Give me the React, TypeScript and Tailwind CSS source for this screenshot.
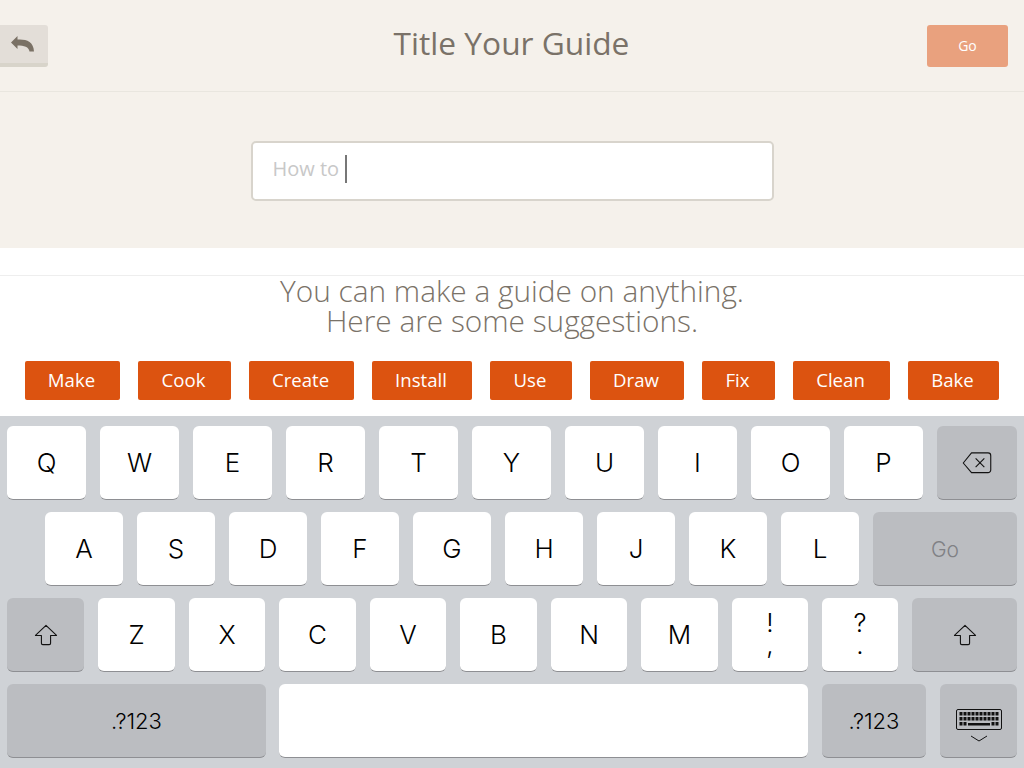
import type { ReactNode } from 'react'

const openSans = { fontFamily: '"Open Sans", sans-serif' }

const suggestions = [
  { label: 'Make', w: 'w-[95px]' },
  { label: 'Cook', w: 'w-[93px]' },
  { label: 'Create', w: 'w-[105px]' },
  { label: 'Install', w: 'w-[100px]' },
  { label: 'Use', w: 'w-[82px]' },
  { label: 'Draw', w: 'w-[94px]' },
  { label: 'Fix', w: 'w-[73px]' },
  { label: 'Clean', w: 'w-[97px]' },
  { label: 'Bake', w: 'w-[91px]' },
]

const row1 = ['Q', 'W', 'E', 'R', 'T', 'Y', 'U', 'I', 'O', 'P']
const row2 = ['A', 'S', 'D', 'F', 'G', 'H', 'J', 'K', 'L']
const row3 = [
  { label: 'Z', w: 'w-[77px]' }, { label: 'X', w: 'w-[76px]' }, { label: 'C', w: 'w-[77px]' }, { label: 'V', w: 'w-[76px]' },
  { label: 'B', w: 'w-[77px]' }, { label: 'N', w: 'w-[76px]' }, { label: 'M', w: 'w-[77px]' },
]

function Key({ className, dark, children }: { className: string; dark?: boolean; children?: ReactNode }) {
  return (
    <div
      className={`h-[74px] shrink-0 rounded-[6px] flex items-center justify-center border-b border-[#8e8f93] text-black font-[275] ${
        dark ? 'bg-[#bbbdc1]' : 'bg-white'
      } ${className}`}
    >
      {children}
    </div>
  )
}

function ShiftIcon() {
  return (
    <svg width="24" height="22" viewBox="0 0 26 24" fill="none" stroke="#111" strokeWidth="1.2" strokeLinejoin="round">
      <path d="M13 1.5 L24.5 12.5 H18 V21 a1.5 1.5 0 0 1-1.5 1.5 H9.5 A1.5 1.5 0 0 1 8 21 V12.5 H1.5 Z" />
    </svg>
  )
}

function BackspaceIcon() {
  return (
    <svg width="30" height="22" viewBox="0 0 32 24" fill="none" stroke="#111" strokeWidth="1.2" strokeLinejoin="round">
      <path d="M10 1 H28 a3 3 0 0 1 3 3 V19.5 a3 3 0 0 1-3 3 H10 L1 12 Z" />
      <path d="M14.5 7 L24 16.5 M24 7 L14.5 16.5" />
    </svg>
  )
}

function KeyboardIcon() {
  const dots = []
  for (let y = 0; y < 3; y++) {
    for (let x = 0; x < 10; x++) {
      if (y === 2 && x > 1 && x < 8) continue
      dots.push(<rect key={`${x}-${y}`} x={3.5 + x * 4} y={3 + y * 5} width="3" height="3.5" fill="#111" />)
    }
  }
  return (
    <svg width="46" height="34" viewBox="0 0 46 34" fill="none">
      <rect x="0.5" y="0.5" width="45" height="20" rx="1.5" stroke="#111" />
      {dots}
      <rect x="12" y="14" width="22" height="2.5" fill="#111" />
      <path d="M15 27 L23 32 L31 27" stroke="#111" strokeWidth="1" />
    </svg>
  )
}

export default function App() {
  return (
    <div className="w-[1024px] h-[768px] overflow-hidden flex flex-col bg-white" style={openSans}>
      {/* Title bar */}
      <div className="h-[248px] shrink-0 bg-[#f5f1eb] flex flex-col">
        <div className="h-[92px] shrink-0 border-b border-[#e9e6df] grid grid-cols-[1fr_auto_1fr] items-center pr-4">
          <button className="w-[48px] h-[42px] bg-[#e3ded8] border-b-4 border-[#d8d4ca] rounded-r-[3px] flex items-center justify-center pr-[3px]">
            <svg width="24" height="16" viewBox="0 0 24 16" fill="#7a7165">
              <path d="M0 6.5 L6.5 0 V3.5 C15 3 22.5 5 23 15.5 H18.5 C18 11 13 9.5 6.5 9.5 V13 Z" />
            </svg>
          </button>
          <h1 className="text-[31.7px] leading-none text-[#7a7268] pb-[6px] pl-[15px]">Title Your Guide</h1>
          <button className="justify-self-end w-[81px] h-[42px] bg-[#e9a17e] rounded-[3px] text-white text-sm">Go</button>
        </div>
        <div className="flex justify-center pt-[49px]">
          <div className="w-[523px] h-[60px] bg-white border-2 border-[#d8d4cc] rounded-[5px] flex items-center pl-[20px] pb-[4px]">
            <span className="text-xl text-[#c8c8c8]">How to</span>
            <span className="ml-[6px] w-[2px] h-[28px] bg-[#777]" />
          </div>
        </div>
      </div>

      {/* Suggestions */}
      <div className="h-[168px] shrink-0 flex flex-col">
        <div className="h-[28px] shrink-0 border-b border-[#eeeeee]" />
        <p className="text-center text-[29.8px] leading-[30px] font-light text-[#7a7268]">
          You can make a guide on anything.
          <br />
          Here are some suggestions.
        </p>
        <div className="flex justify-center gap-[18px] mt-[25px]">
          {suggestions.map(s => (
            <button key={s.label} className={`h-[39px] pb-[2px] pr-[2px] bg-[#dc5310] rounded-[2px] text-white text-[18.6px] ${s.w}`}>
              {s.label}
            </button>
          ))}
        </div>
      </div>

      {/* Keyboard */}
      <div
        className="flex-1 bg-[#cfd2d6] px-[7px] pt-[10px] flex flex-col gap-[12px] text-[26px]"
        style={{ fontFamily: 'Inter, sans-serif' }}
      >
        <div className="flex gap-[14px]">
          {row1.map(k => (
            <Key key={k} className="w-[79px]">{k}</Key>
          ))}
          <Key dark className="w-[80px]"><BackspaceIcon /></Key>
        </div>
        <div className="flex gap-[14px] pl-[38px]">
          {row2.map(k => (
            <Key key={k} className="w-[78px]">{k}</Key>
          ))}
          <Key dark className="w-[144px] text-[21px] !text-[#808185] pt-[2px]">Go</Key>
        </div>
        <div className="flex gap-[14px]">
          <Key dark className="w-[77px]"><ShiftIcon /></Key>
          {row3.map(k => (
            <Key key={k.label} className={k.w}>{k.label}</Key>
          ))}
          <Key className="w-[76px] flex-col leading-[22px] pb-[2px]"><span>!</span><span>,</span></Key>
          <Key className="w-[76px] flex-col leading-[22px] pb-[2px]"><span>?</span><span>.</span></Key>
          <Key dark className="w-[105px]"><ShiftIcon /></Key>
        </div>
        <div className="flex gap-[14px]">
          <Key dark className="w-[259px] text-[22px] pt-[1px]">.?123</Key>
          <Key className="w-[529px] -ml-px" />
          <Key dark className="w-[104px] text-[22px] pt-[1px]">.?123</Key>
          <Key dark className="w-[77px] pt-[10px]"><KeyboardIcon /></Key>
        </div>
      </div>
    </div>
  )
}
